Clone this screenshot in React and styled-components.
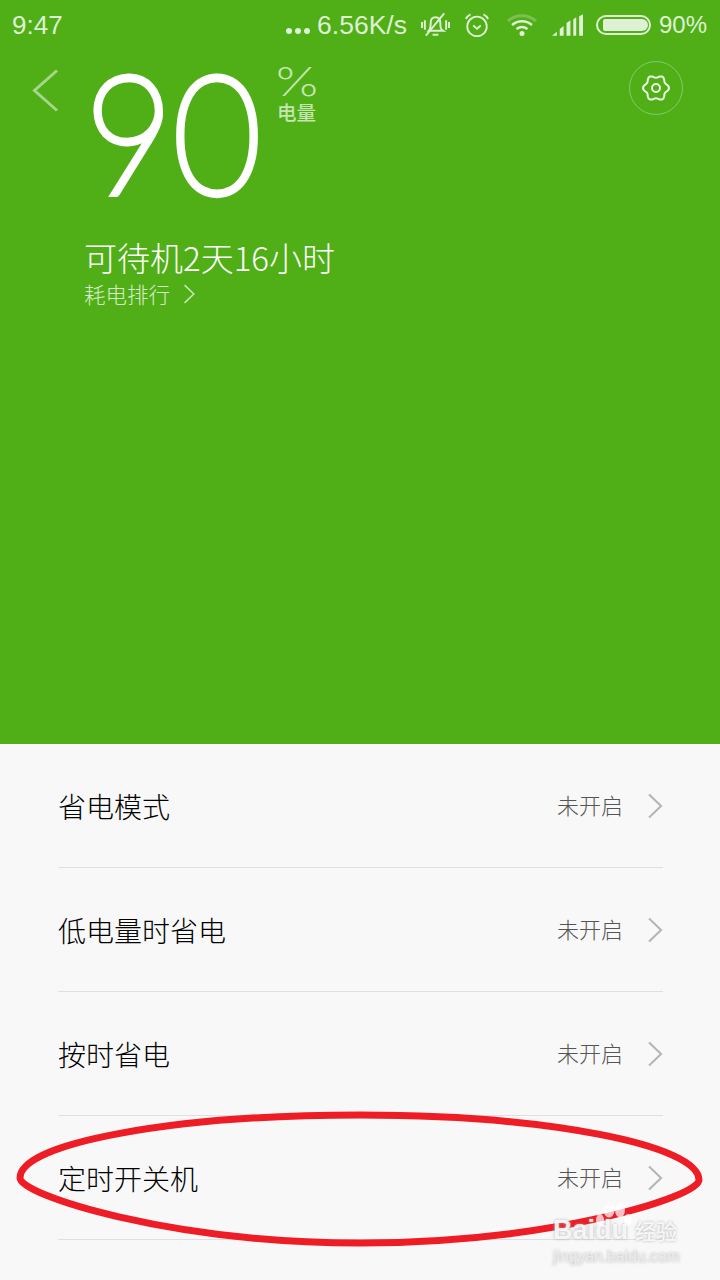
import React from "react"
import styled, { createGlobalStyle } from "styled-components"

const CJK = `"Noto Sans CJK SC", "Liberation Sans", sans-serif`
const rows = ["省电模式", "低电量时省电", "按时省电", "定时开关机"]

// six lobed gear outline
const gearPath = () => {
  const pts = []
  for (let i = 0; i < 72; i++) {
    const a = (i / 72) * Math.PI * 2
    const r = 11.6 + 1.4 * Math.cos(6 * a)
    pts.push(`${(15 + r * Math.cos(a)).toFixed(2)} ${(15 + r * Math.sin(a)).toFixed(2)}`)
  }
  return "M" + pts.join("L") + "Z"
}

const Chevron = ({ size = 26, color = "#b4b4b4", width = 2 }) => (
  <svg width={size * 0.62} height={size} viewBox="0 0 16 26" fill="none">
    <path d="M2 1.5 L14 13 L2 24.5" stroke={color} strokeWidth={width} />
  </svg>
)

export default function App() {
  return (
    <Page>
      <GlobalStyle />
      <Hero>
        <StatusBar>
          <Time>9:47</Time>
          <StatusRight>
            <Dots><i /><i /><i /></Dots>
            <StatusText>6.56K/s</StatusText>
            <svg width="29" height="26" viewBox="0 0 30 26" fill="none" stroke="#dff0d5" strokeWidth="2">
              <path d="M1 10v6M4 8v10M26 8v10M29 10v6" />
              <path d="M8 19c2-2 2-4 2-8 0-4 2-6 5-6s5 2 5 6c0 4 0 6 3 8z" />
              <path d="M12 23h6M5 24 24 1" />
            </svg>
            <AlarmIcon width="26" height="26" viewBox="0 0 28 27" fill="none" stroke="#dff0d5" strokeWidth="2">
              <circle cx="14" cy="15" r="10.5" />
              <path d="M10 14l4 3.5 4-3.5M2 7c1-2 3-4 5-5M26 7c-1-2-3-4-5-5" />
            </AlarmIcon>
            <svg width="32" height="24" viewBox="0 0 32 24" fill="none">
              <path d="M2 8C10 1 22 1 30 8" stroke="#dff0d5" strokeOpacity=".3" strokeWidth="3" />
              <path d="M6 12C12 7 20 7 26 12M10.500 16C14 13.500 18 13.500 21.500 16" stroke="#dff0d5" strokeWidth="2.500" />
              <circle cx="16" cy="20.500" r="2.500" fill="#dff0d5" />
            </svg>
            <SignalIcon width="31" height="22" viewBox="0 0 32 22" fill="#dff0d5">
              <path d="M0 22 5 18v4zM8 22V15l4-3v10zM15 22V9l4-3v16zM22 22V5l3-2v19zM28 22V2l4-2v22z" />
            </SignalIcon>
            <Battery><BatteryFill /></Battery>
            <BatteryText>90%</BatteryText>
          </StatusRight>
        </StatusBar>

        <TopRow>
          <BackButton>
            <svg width="27" height="44" viewBox="0 0 27 44" fill="none">
              <path d="M25 1.500 2.500 21.500 25 41.500" stroke="#a5d68b" strokeWidth="3" />
            </svg>
          </BackButton>
          <BigNumber>90</BigNumber>
          <Unit>
            <Percent>%</Percent>
            <UnitLabel>电量</UnitLabel>
          </Unit>
          <GearButton>
            <svg width="30" height="30" viewBox="0 0 30 30" fill="none" stroke="#e9f5e2" strokeWidth="2">
              <path d={gearPath()} />
              <circle cx="15" cy="15" r="4" />
            </svg>
          </GearButton>
        </TopRow>

        <Standby>可待机2天16小时</Standby>
        <RankLink>
          耗电排行
          <Chevron size={20} color="#c8e6b6" />
        </RankLink>
      </Hero>

      <List>
        {rows.map((r) => (
          <Row key={r}>
            <RowTitle>{r}</RowTitle>
            <RowValue>未开启</RowValue>
            <Chevron size={26} />
          </Row>
        ))}
      </List>

      <Annotation width="720" height="160" viewBox="0 0 720 160" fill="none">
        <path
          d="M20 77C20 42 173 14 360 14C547 14 699 44 699 79C699 96 550 142 360 142C170 142 20 94 20 77Z"
          stroke="#ee1c25"
          strokeWidth="7"
        />
      </Annotation>

      <Watermark>
        <BrandLine>
          Baidu
          <BrandCn>经验</BrandCn>
        </BrandLine>
        <Paw width="38" height="24" viewBox="0 0 38 24" fill="#fff" fillOpacity=".72">
          <ellipse cx="5" cy="18" rx="4" ry="6" />
          <ellipse cx="14" cy="8" rx="5.500" ry="7.500" />
          <ellipse cx="25" cy="8" rx="5" ry="7.500" />
          <ellipse cx="33" cy="18" rx="4" ry="6" />
        </Paw>
        <BrandUrl>jingyan.baidu.com</BrandUrl>
      </Watermark>
    </Page>
  )
}

const GlobalStyle = createGlobalStyle`
  body {
    margin: 0;
    background: #f8f8f8;
  }
`
const Page = styled.div`
  position: relative;
  width: 720px;
  height: 1280px;
  overflow: hidden;
  background: #f8f8f8;
  font-family: ${CJK};
`
const Hero = styled.div`
  height: 744px;
  background: #50af17;
  padding-left: 12px;
  box-sizing: border-box;
`
const StatusBar = styled.div`
  display: flex;
  justify-content: space-between;
  align-items: center;
  height: 50px;
  padding-right: 13px;
  color: #dff0d5;
  font-family: "Liberation Sans", sans-serif;
  font-size: 26px;
`
const Time = styled.span``
const StatusRight = styled.div`
  display: flex;
  align-items: center;
  gap: 14px;
`
const StatusText = styled.span`
  margin-left: -7px;
  font-size: 26.500px;
`
const BatteryText = styled.span`
  font-size: 24px;
  margin-left: -6px;
`
const AlarmIcon = styled.svg`
  margin-right: 2px;
`
const SignalIcon = styled.svg`
  margin-right: -1px;
`
const Dots = styled.div`
  display: flex;
  gap: 3px;
  margin-top: 12px;
  i {
    width: 6px;
    height: 6px;
    border-radius: 50%;
    background: #dff0d5;
  }
`
const Battery = styled.div`
  width: 55px;
  height: 20px;
  border: 2px solid #dff0d5;
  border-radius: 10px;
  padding: 2px 1px 2px 5px;
  box-sizing: border-box;
  display: flex;
`
const BatteryFill = styled.div`
  flex: 1;
  background: #dff0d5;
  border-radius: 2px 6px 6px 2px;
`
const TopRow = styled.div`
  display: flex;
  align-items: flex-start;
  height: 168px;
`
const BackButton = styled.div`
  padding: 19px 0 0 20px;
  width: 47px;
  flex: none;
`
const BigNumber = styled.div`
  font-family: "Lato", sans-serif;
  font-weight: 100;
  font-size: 165px;
  line-height: 170px;
  color: #fff;
  flex: none;
  width: 193px;
  margin-left: 6px;
  margin-top: -5px;
  -webkit-text-stroke: 7px #fff;
  transform: scaleX(0.92);
  transform-origin: left top;
`
const Unit = styled.div`
  display: flex;
  flex-direction: column;
  margin-top: 13px;
  color: #c5e5b2;
`
const Percent = styled.div`
  font-family: "Inter", sans-serif;
  font-weight: 200;
  font-size: 39px;
  line-height: 37px;
  margin-left: -5px;
  transform: scaleX(1.38);
  transform-origin: left center;
`
const UnitLabel = styled.div`
  font-size: 19.500px;
  font-weight: 500;
  line-height: 24px;
  margin-left: -1px;
`
const GearButton = styled.div`
  width: 54px;
  height: 54px;
  margin-left: auto;
  margin-right: 37px;
  margin-top: 11px;
  border: 1px solid #86c968;
  border-radius: 50%;
  box-sizing: border-box;
  display: flex;
  align-items: center;
  justify-content: center;
`
const Standby = styled.div`
  margin: 17px 0 0 72px;
  font-size: 33px;
  font-weight: 300;
  line-height: 44px;
  color: #fff;
`
const RankLink = styled.div`
  display: flex;
  align-items: center;
  gap: 13px;
  margin-left: 72px;
  font-size: 21.500px;
  font-weight: 300;
  line-height: 30px;
  color: #d5ecc7;
`
const List = styled.div`
  margin: 0 57px 0 58px;
`
const Row = styled.div`
  display: flex;
  align-items: center;
  height: 124px;
  box-sizing: border-box;
  border-bottom: 1px solid #dfdfdf;
`
const RowTitle = styled.div`
  flex: 1;
  font-size: 28px;
  font-weight: 300;
  color: #000;
`
const RowValue = styled.div`
  font-size: 22px;
  font-weight: 300;
  color: #555;
  margin-right: 24px;
  padding-bottom: 4px;
`
const Annotation = styled.svg`
  position: absolute;
  left: 0;
  top: 1101px;
`
const Watermark = styled.div`
  position: absolute;
  left: 553px;
  top: 1208px;
  width: 130px;
  color: rgba(255, 255, 255, 0.85);
  text-shadow: 0 0 3px rgba(170, 170, 170, 0.9);
`
const BrandLine = styled.div`
  display: flex;
  align-items: flex-end;
  font-family: "Liberation Sans", sans-serif;
  font-weight: 700;
  font-size: 27px;
  line-height: 44px;
  height: 44px;
`
const BrandCn = styled.span`
  font-family: ${CJK};
  font-size: 21px;
  font-weight: 500;
  margin-left: 7px;
`
const Paw = styled.svg`
  position: absolute;
  left: 42px;
  top: -6px;
`
const BrandUrl = styled.div`
  margin-top: -4px;
  font-family: "Liberation Sans", sans-serif;
  font-size: 15.700px;
  line-height: 18px;
  color: rgba(238, 238, 238, 0.9);
`
